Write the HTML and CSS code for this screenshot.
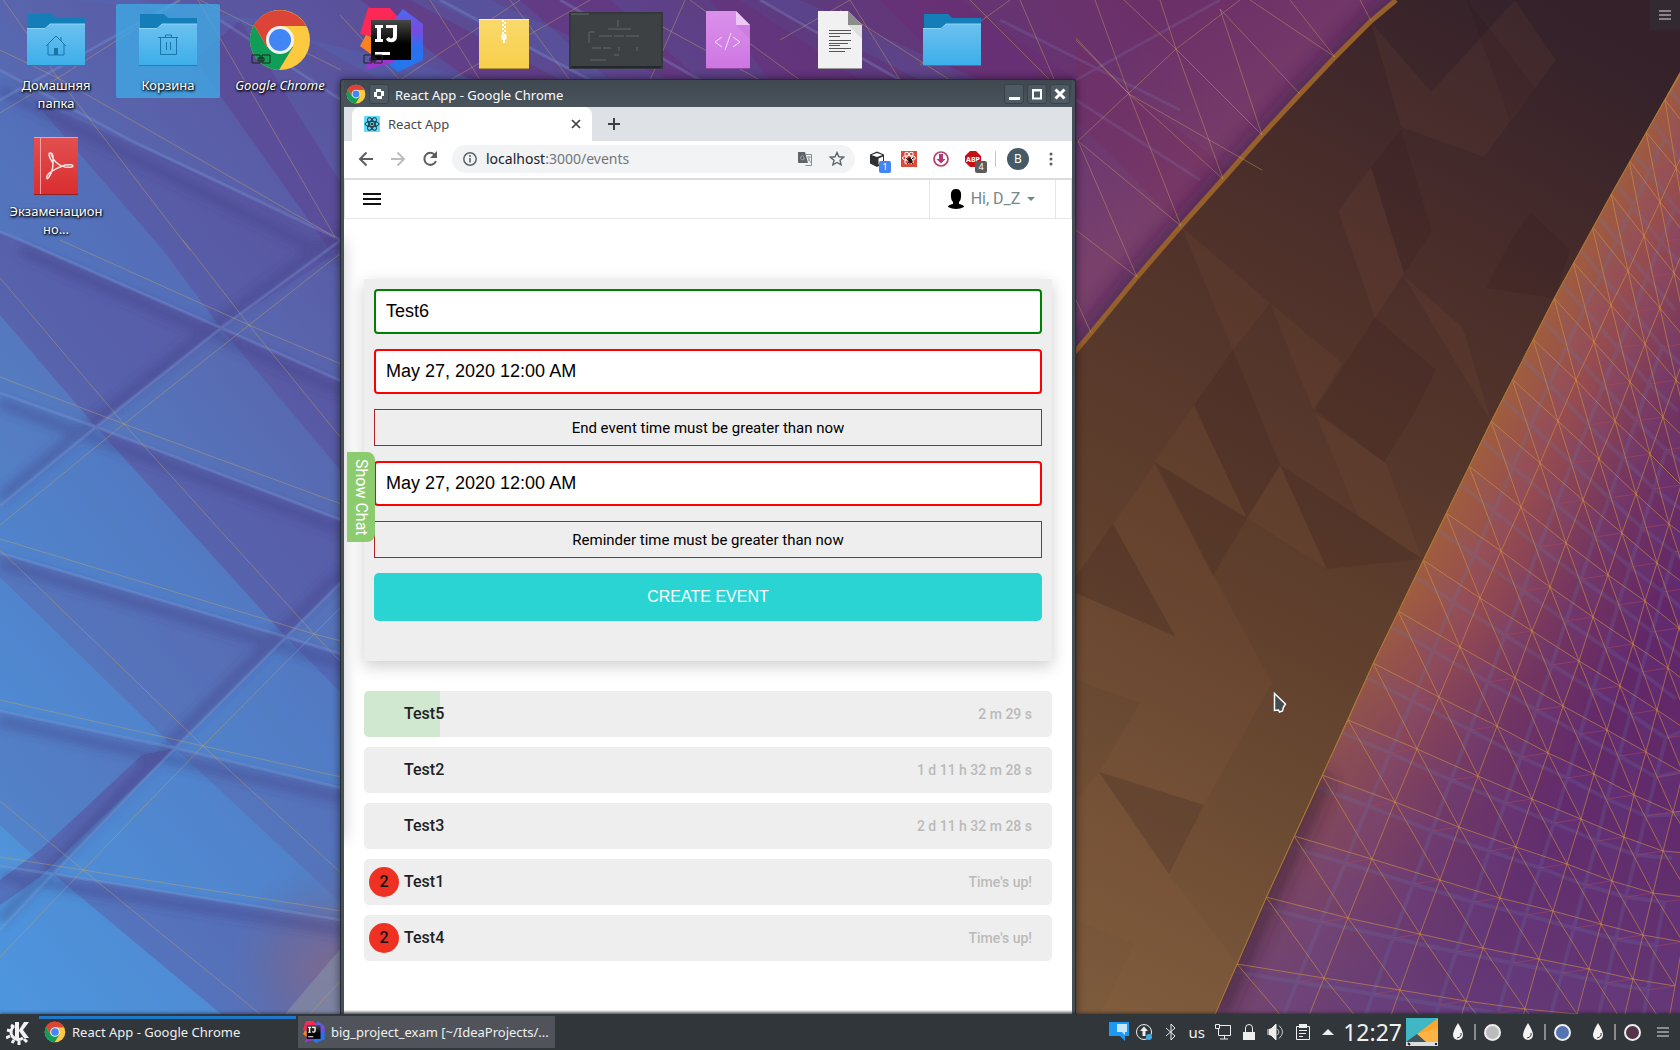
FILE: index.html
```html
<!DOCTYPE html>
<html lang="ru">
<head>
<meta charset="utf-8">
<title>Desktop</title>
<link rel="stylesheet" href="styles.css">
</head>
<body>
<svg width="0" height="0" class="defs" aria-hidden="true">
  <defs>
    <linearGradient id="folderFace" x2="0" y2="1"><stop offset="0" stop-color="#6cc1f0"/><stop offset="1" stop-color="#3daee9"/></linearGradient>
    <linearGradient id="ijBlue" x2="0" y2="1"><stop offset="0" stop-color="#4a6af0"/><stop offset=".35" stop-color="#7a4ae0"/><stop offset=".6" stop-color="#2a70f0"/><stop offset="1" stop-color="#2478ea"/></linearGradient>
    <linearGradient id="ijBlack" x2="0" y2="1"><stop offset="0" stop-color="#484848"/><stop offset=".6" stop-color="#000"/></linearGradient>
    <linearGradient id="pdfRed" x2="0" y2="1"><stop offset="0" stop-color="#e25050"/><stop offset="1" stop-color="#da2d30"/></linearGradient>
    <linearGradient id="zipYellow" x2="0" y2="1"><stop offset="0" stop-color="#f9d96b"/><stop offset="1" stop-color="#f7cf4b"/></linearGradient>
    <linearGradient id="codePink" x2="0" y2="1"><stop offset="0" stop-color="#da90ea"/><stop offset="1" stop-color="#cd76e2"/></linearGradient>
  </defs>
  <symbol id="folder" viewBox="0 0 64 64">
    <path d="M4 6h24l4 4h29v12H4z" fill="#147eb8"/>
    <path d="M3 21h18l5-5h35v41H3z" fill="url(#folderFace)"/>
    <path d="M3 20.500h18l5-4.500h35" fill="none" stroke="#8fd4f8"/>
    <path d="M3 57.500h58" stroke="#2b7ca8"/>
  </symbol>
  <symbol id="chrome" viewBox="0 0 64 64">
    <circle cx="32" cy="32" r="30" fill="#fdca3f"/>
    <path d="M32 32 6 17A30 30 0 0 1 58 18H32z" fill="#db4437"/>
    <path d="M6 17A30 30 0 0 0 31 62L45 39 32 32 19 39z" fill="#0f9d58"/>
    <path d="M6 17 19 39l4-19 9-2h26A30 30 0 0 0 6 17z" fill="#db4437"/>
    <circle cx="32" cy="32" r="14" fill="#f1f1f1"/><circle cx="32" cy="32" r="11" fill="#4285f4"/>
  </symbol>
  <symbol id="idea" viewBox="0 0 64 64">
    <path d="M8 0h22l12 14v20L0 26z" fill="#fe2857"/>
    <path d="M6 27 0 38l12 9 4-16z" fill="#fd8121"/>
    <path d="m43 1 20 15v36L38 64 24 52V24z" fill="url(#ijBlue)"/>
    <path d="m12 44-7 18 30-8-5-14z" fill="#9a35d0"/>
    <path d="M11 12h40v40H11z" fill="url(#ijBlack)"/>
    <path d="M15 17h8v3h-2v11h2v3h-8v-3h2V20h-2zM26 17h11v11q0 7-7 6-3 0-4-3l3-2q2 3 4 0v-9h-7zM15 44h15v3H15z" fill="#fff"/>
  </symbol>
  <symbol id="chain" viewBox="0 0 20 10"><path d="M1 1h8v8H1zM11 1h8v8h-8zM7 4h6v3H7z" fill="none" stroke="#1c2420"/></symbol>
  <symbol id="drop" viewBox="0 0 12 18"><path d="M6 0q5 8 5 12a5 5 0 0 1-10 0Q1 8 6 0z" fill="#f4f4f4"/><path d="M9 10q1 4-4 5" fill="none" stroke="#31363b"/></symbol>
</svg>

<div class="desktop">
  <svg id="wallpaper" class="wallpaper" viewBox="0 0 1680 1050" preserveAspectRatio="xMidYMid slice" aria-hidden="true">
    <defs>
      <linearGradient id="sky" gradientUnits="userSpaceOnUse" x1="30" y1="1010" x2="1180" y2="60">
        <stop offset="0" stop-color="#4f9adf"/><stop offset=".28" stop-color="#5578be"/><stop offset=".5" stop-color="#5a5aa4"/><stop offset=".62" stop-color="#5b4e98"/><stop offset=".82" stop-color="#5e3a80"/><stop offset="1" stop-color="#6c3068"/>
      </linearGradient>
      <linearGradient id="brown" gradientUnits="userSpaceOnUse" x1="1090" y1="1000" x2="1600" y2="30">
        <stop offset="0" stop-color="#7c5a3c"/><stop offset=".4" stop-color="#5f3f2c"/><stop offset=".7" stop-color="#4e302a"/><stop offset="1" stop-color="#34212a"/>
      </linearGradient>
      <linearGradient id="dusk" gradientUnits="userSpaceOnUse" x1="1440" y1="500" x2="1660" y2="610">
        <stop offset="0" stop-color="#a2603c"/><stop offset=".3" stop-color="#964c50"/><stop offset=".65" stop-color="#743560"/><stop offset="1" stop-color="#622768"/>
      </linearGradient>
      <linearGradient id="duskLow" gradientUnits="userSpaceOnUse" x1="1560" y1="640" x2="1440" y2="1014">
        <stop offset="0" stop-color="#5f3070" stop-opacity="0"/><stop offset="1" stop-color="#65407c" stop-opacity=".75"/>
      </linearGradient>
      <linearGradient id="rose" gradientUnits="userSpaceOnUse" x1="1090" y1="60" x2="1180" y2="210">
        <stop offset="0" stop-color="#7a3f6a" stop-opacity="0"/><stop offset="1" stop-color="#7e4268" stop-opacity=".8"/>
      </linearGradient>
      <radialGradient id="ember" gradientUnits="userSpaceOnUse" cx="330" cy="970" r="110"><stop offset="0" stop-color="#7c6a90"/><stop offset=".5" stop-color="#6c6a9c" stop-opacity=".7"/><stop offset="1" stop-color="#5a70b0" stop-opacity="0"/></radialGradient>
      <filter id="soft" x="-20%" y="-20%" width="140%" height="140%"><feGaussianBlur stdDeviation="9"/></filter>
      <filter id="mist" x="-5%" y="-5%" width="110%" height="110%"><feGaussianBlur stdDeviation="5"/></filter>
      <clipPath id="duskClip"><path d="M1680 72 1611 194 1554 298 1491 421 1423 560 1373 663 1322 775 1266 897 1215 1013V1050H1680z"/></clipPath>
    </defs>
    <path d="M0 0h1680v1050H0z" fill="url(#sky)"/>
    <path d="M1000 0H1400L1076 360z" fill="url(#rose)"/>
    <g fill="#5b4795" fill-opacity=".4">
      <path d="M0 240V315L96 427 221 328 20 240 0 232z"/>
      <path d="M96 427 286 637 341 582V520z"/>
      <path d="M221 328 341 471V381z"/>
      <path d="M0 553 0 577 175 748 286 637z" fill-opacity=".25"/>
      <path d="M286 637 341 693V654z"/>
      <path d="M175 748 341 903V788z" fill-opacity=".22"/>
      <path d="M53 874 221 1014H341V920z" fill-opacity=".38"/>
      <path d="M0 711V825L53 874 175 748z" fill-opacity=".2"/>
      <path d="M0 905 40 877 175 748 142 755 40 850 0 880z" fill-opacity=".45"/>
      <path d="M33 100 163 250 221 328 341 250V237z" fill-opacity=".3"/>
      <path d="M195 60 330 250H345V190L240 20z" fill-opacity=".7"/>
      <path d="M360 0 470 80H560L410 0zM520 0 610 80H700L610 0zM710 0 770 80H860L740 0zM880 0 960 80 1076 160V80L960 0z" fill="#6b2a76"/>
      <path d="M1076 45 1140 100 1230 170 1180 226 1076 120z" fill="#762a5c" fill-opacity=".3"/>
    </g>
    <g fill="#4a86d8" fill-opacity=".22">
      <path d="M0 506 96 427 286 637 0 553z"/>
      <path d="M0 577V711L175 748z"/>
      <path d="M53 874 0 930V1014H221z"/>
      <path d="M0 70V232L221 328 163 250 33 100z" fill-opacity=".18"/>
      <path d="M175 748 286 637 341 654V788z"/>
      <path d="M70 0h70L480 80H380L270 20zM430 0h60l180 80h-80zM760 0h40l180 80h-60z" fill-opacity=".14"/>
      <path d="M53 874 175 748 341 903V920z"/>
    </g>
    <path d="M200 1014V850H341V1014z" fill="url(#ember)"/>
    <path d="M285 1014 341 948V1014z" fill="#8188a2" fill-opacity=".8"/>
    <path d="M20 250 341 391M0 403 341 530M0 563 341 664M0 721 341 798M0 876 341 930M0 498 96 419 221 320 341 232M0 920 175 738 341 572M0 90 341 262" fill="none" stroke="#3f3a80" stroke-opacity=".35" stroke-width="12" filter="url(#mist)"/>
    <g fill="none" stroke="#86a0dc" stroke-opacity=".28" stroke-width="3">
      <path d="M0 232 20 240 221 328 341 381M0 393 96 427 341 520M0 553 286 637 341 654M0 711 175 748 341 788M0 866 53 874 341 920M0 506 96 427 221 328 341 240M0 930 53 874 175 748 286 637 341 582M0 70 130 140 341 240M0 100 180 0M220 20 341 100M440 0 590 80M560 0 700 80M760 0 900 80" />
      <path d="M1000 20 1180 110M1076 100 1200 180M1076 80 1220 0" stroke-opacity=".14"/>
    </g>
    <path d="M1420 -20 1371 21 1300 94 1223 179 1137 277 1060 373" fill="none" stroke="#301848" stroke-width="24" stroke-opacity=".5" filter="url(#soft)"/>
    <path d="M1395 0 1371 21 1335 57 1300 94 1262 135 1223 179 1181 226 1137 277 1091 333 1070 360V1050H1215L1266 897 1322 775 1373 663 1423 560 1491 421 1554 298 1611 194 1680 72V0z" fill="url(#brown)"/>
    <g fill="#b0754a" fill-opacity=".08">
      <path d="M1194 405 1247 518 1154 462zM1280 465 1247 518 1327 569zM1270 303 1342 363 1313 410zM1315 413 1386 463 1422 559 1358 516zM1403 275 1463 328 1491 421zM1371 22 1431 92 1401 127zM1338 211 1371 167 1404 273 1375 318zM1099 772 1204 805 1140 703zM1134 944 1169 874 1237 963zM1175 636 1272 683 1214 576 1156 462 1113 524zM1076 593 1175 636 1272 683 1204 805 1140 703 1076 680zM1076 800 1099 772 1169 874 1134 944 1076 920zM1134 944 1237 963 1215 1013H1100zM1401 127 1484 157 1556 60 1515 0 1431 92zM1181 226 1233 350 1270 303z"/>
    </g>
    <g fill="#24101a" fill-opacity=".13">
      <path d="M1154 462 1247 518 1213 576zM1375 318 1436 370 1412 417zM1315 410 1375 318 1412 417 1384 462zM1401 130 1432 231 1404 273 1371 167zM1113 524 1175 636 1076 593V576zM1099 772 1204 805 1169 874zM1280 465 1358 516 1422 559 1327 569zM1194 405 1233 350 1280 465 1247 518zM1467 0 1535 88 1510 120zM1486 288 1508 246 1530 212 1570 250 1554 298z"/>
    </g>
    <path d="M1396 0 1371 21 1335 57 1300 94 1262 135 1223 179 1181 226 1137 277 1091 333 1074 353" fill="none" stroke="#96602c" stroke-width="5"/>
    <g clip-path="url(#duskClip)">
      <path d="M1200 50h480v1000h-480z" fill="url(#dusk)"/>
      <path d="M1200 600h480v450h-480z" fill="url(#duskLow)"/>
      <path id="facets" fill="#6a5ac0" fill-opacity=".09"/>
      <path id="ghost" fill="none" stroke="#6a78a8" stroke-opacity=".2" stroke-width="4"/>
      <path id="ticks" fill="none" stroke="#b04858" stroke-opacity=".5"/>
      <path d="M1322 775 1266 897 1215 1013" fill="none" stroke="#3a2030" stroke-opacity=".6" stroke-width="26" filter="url(#soft)"/>
      <path id="lattice" fill="none" stroke="#d79a3c" stroke-opacity=".55"/>
      <path d="M1680 72 1611 194 1554 298 1491 421 1423 560 1373 663 1322 775 1266 897 1215 1013" fill="none" stroke="#a87830" stroke-width="2"/>
    </g>
    <g fill="none" stroke="#c8a860" stroke-opacity=".42">
      <path d="M0 278 124 424 314 634 341 662M183 240 249 325 341 438M60 240 249 325 341 364M0 377 124 424 341 504M0 539 314 634 341 641M0 550 203 746 341 873M0 700 203 746 341 777M0 801 83 870 260 1014M0 857 83 870 341 911M0 525 124 424 249 325 341 253M0 957 83 870 203 746 314 634 341 607M310 1014 341 980"/>
      <path d="M0 -5 58 78 190 250M0 50 58 78 335 237M0 113 58 78 180 0M198 0 335 237M200 0 341 70M430 0 480 80M340 15 400 80M510 0 570 80M400 80 520 0M590 0 450 80M685 0 650 80M690 0 800 80M650 20 760 80M780 40 850 0M850 0 900 80M840 10 950 80M920 65 1010 0M970 0 1050 80M1020 0 1076 130M1076 40 1129 94 1262 170"/>
      <path d="M1240 0 1176 49 1078 141M1220 9 1300 94M1220 9 1262 135 1176 49M1129 94 1223 179 1176 49 1160 0M1078 141 1181 226 1129 94 1095 0M1078 141 1137 277 1076 230M1091 333 1076 300M1371 21 1360 0M1290 0 1335 57 1250 0M1076 38 1129 94M1124 0 1176 49"/>
    </g>
  </svg>

  <main class="workspace">
    <div class="icons">
      <a class="icon" href="#home"><svg class="icon-art" viewBox="0 0 64 64"><use href="#folder"/><path d="M22 38l10-10 10 10M24 36v11h16V36M37 29v4" fill="none" stroke="#1a75a8"/><path d="M30 40h4v7h-4z" fill="#1a75a8"/></svg><span>Домашняя папка</span></a>
      <a class="icon selected" href="#trash"><svg class="icon-art" viewBox="0 0 64 64"><use href="#folder"/><path d="M22 29.500h20M29.500 29v-2h6v2M24.500 30v16.500h16V30M30.500 34v8M34.500 34v8" fill="none" stroke="#1a75a8"/></svg><span>Корзина</span></a>
      <a class="icon" href="#chrome-link"><svg class="icon-art" viewBox="0 0 64 64"><use href="#chrome"/><use href="#chain" x="3" y="46" width="20" height="10"/></svg><em>Google Chrome</em></a>
      <a class="icon" href="#idea-link" aria-label="IDE"><svg class="icon-art" viewBox="0 0 64 64"><use href="#idea"/><use href="#chain" x="3" y="46" width="20" height="10"/></svg></a>
      <a class="icon" href="#zip" aria-label="Archive"><svg class="icon-art" viewBox="0 0 64 64"><path d="M7 11h50v50H7z" fill="url(#zipYellow)"/><path d="M7 60.500h50" stroke="#b5952f"/><path d="M7 11.500h50" stroke="#fff0b0"/><path d="M31 12v16" stroke="#fff" stroke-width="2" stroke-dasharray="2 2"/><path d="M33 14v14" stroke="#fff" stroke-width="2" stroke-dasharray="2 2"/><path d="M30.500 27.500h3v3h-3zM32 31v4" fill="none" stroke="#fff" stroke-width="2"/></svg></a>
      <a class="icon" href="#shot" aria-label="Screenshot"><svg class="icon-art wide" viewBox="0 0 96 64"><path d="M1 4h94v57H1z" fill="#33383d"/><path d="M3 6h90v52H3z" fill="#3d4144"/><path d="M3 6h18M50 12v7M40 21h23M21 24v11M27 24h-6M31 28h13M46 28h10M58 28h13M24 40h9M35 40h8M51 39v4M69 39v4M46 47h5M22 52h16" stroke="#62686b" fill="none"/><path d="M3 59h90" stroke="#22282d" stroke-width="2"/></svg></a>
      <a class="icon" href="#code" aria-label="Markup file"><svg class="icon-art" viewBox="0 0 64 64"><path d="M10 3h30l14 14v44H10z" fill="url(#codePink)"/><path d="M40 3l14 14H40z" fill="#edc7f5"/><path d="M40 17h14v14z" fill="#b868cc" fill-opacity=".3"/><path d="M10 60.500h44" stroke="#8f4aa0"/><path d="m26 29-7 5 7 5M37 29l7 5-7 5M35 25l-6 17" fill="none" stroke="#f8e6fc"/></svg></a>
      <a class="icon" href="#text" aria-label="Text file"><svg class="icon-art" viewBox="0 0 64 64"><path d="M10 3h30l14 14v44H10z" fill="#f1f1f1"/><path d="M40 3l14 14H40z" fill="#8b8b8b"/><path d="M40 17h14v14z" fill="#ccc" fill-opacity=".5"/><path d="M10 60.500h44" stroke="#999"/><path d="M21 22.500h22M21 25.500h22M21 28.500h11M21 32.500h22M21 35.500h19M21 37.500h11M21 40.500h22M21 43.500h16" stroke="#555"/></svg></a>
      <a class="icon" href="#folder-link" aria-label="Folder"><svg class="icon-art" viewBox="0 0 64 64"><use href="#folder"/></svg></a>
      <a class="icon row2" href="#pdf"><svg class="icon-art" viewBox="0 0 64 64"><path d="M10 3h44v58H10z" fill="url(#pdfRed)"/><path d="M10 3.500h44M16.500 4v56" stroke="#f4a0a0"/><path d="M10 60.500h44" stroke="#8f2024"/><path d="M29 29q-6-9-3-10 4-1 3 10 0 8-4 14-3 4-2-1 2-5 18-11 8-1 8 1t-8 1Q31 31 27 20" fill="none" stroke="#fbe3e3" stroke-width="1.500"/></svg><span>Экзаменационно...</span></a>
    </div>

    <button class="toolbox" aria-label="Desktop toolbox"><svg width="14" height="12"><path d="M1 2h12M1 6h12M1 10h12" stroke="#a8a3a8" stroke-width="1.500"/></svg></button>

    <section class="window">
      <header class="titlebar">
        <svg width="20" height="20"><use href="#chrome"/></svg>
        <button class="win-btn" aria-label="Pin"><svg width="12" height="12"><path d="M3 1h5v2h3v5H9v3H4V9H1V4h2z" fill="#fff"/><path d="M4 4h4v4H4z" fill="#4d5a63"/></svg></button>
        <h1>React App - Google Chrome</h1>
        <button class="win-btn" aria-label="Minimize"><svg width="12" height="12"><path d="M1 10.500h11" stroke="#fff" stroke-width="3"/></svg></button>
        <button class="win-btn" aria-label="Maximize"><svg width="12" height="12"><path d="M2 2.500h8v8H2z" fill="none" stroke="#fff" stroke-width="2"/><path d="M1 2h10" stroke="#fff" stroke-width="2"/></svg></button>
        <button class="win-btn" aria-label="Close"><svg width="12" height="12"><path d="m1.500 1.500 9 9m0-9-9 9" stroke="#fff" stroke-width="3"/></svg></button>
      </header>
      <div class="browser">
        <div class="tabs">
          <div class="tab">
            <svg width="16" height="16" viewBox="0 0 16 16"><rect width="16" height="16" rx="1" fill="#61dafb"/><g fill="none" stroke="#20323a"><ellipse cx="8" cy="8" rx="7" ry="2.700"/><ellipse cx="8" cy="8" rx="7" ry="2.700" transform="rotate(60 8 8)"/><ellipse cx="8" cy="8" rx="7" ry="2.700" transform="rotate(120 8 8)"/></g><circle cx="8" cy="8" r="1.300" fill="#20323a"/></svg>
            <span>React App</span>
            <button aria-label="Close tab"><svg width="10" height="10"><path d="m1 1 8 8m0-8-8 8" stroke="#3c4043" stroke-width="1.700"/></svg></button>
          </div>
          <button class="new-tab" aria-label="New tab"><svg width="12" height="12"><path d="M6 0v12M0 6h12" stroke="#3c4043" stroke-width="2"/></svg></button>
        </div>
        <div class="toolbar">
          <button aria-label="Back"><svg width="16" height="16"><path d="M15 8H2m6.500-6.500L2 8l6.500 6.500" fill="none" stroke="#5a5e62" stroke-width="2"/></svg></button>
          <button aria-label="Forward"><svg width="16" height="16"><path d="M1 8h13M7.500 1.500 14 8l-6.500 6.500" fill="none" stroke="#bbbdc0" stroke-width="2"/></svg></button>
          <button aria-label="Reload"><svg width="16" height="16"><path d="M13 4A6 6 0 1 0 14 10" fill="none" stroke="#5a5e62" stroke-width="2"/><path d="M15 0v7H8z" fill="#5a5e62"/></svg></button>
          <div class="address">
            <svg width="14" height="14"><circle cx="7" cy="7" r="6.200" fill="none" stroke="#5f6368" stroke-width="1.500"/><path d="M7 6v4.500M7 3v2" stroke="#5f6368" stroke-width="1.600"/></svg>
            <span class="url" role="textbox" aria-label="Address"><b>localhost</b>:3000/events</span>
            <svg width="14" height="14"><path d="M7.500 2.500h6v11h-6" fill="none" stroke="#8a8d91"/><path d="M0 0h7l3 11H1q-1 0-1-1z" fill="#5f6368"/><path d="M6 4.500A2 2 0 1 0 6.500 6H5M9 5h4M11 4q1 4-2 6M10 6l3 5" fill="none" stroke="#9da0a3"/></svg>
            <svg class="star" width="16" height="16"><path d="m8 1.500 1.900 4.300 4.700.4-3.600 3.100 1.100 4.600L8 11.500l-4.100 2.400L5 9.300 1.400 6.200l4.700-.4z" fill="none" stroke="#5f6368" stroke-width="1.400"/></svg>
          </div>
          <button class="ext" aria-label="Cube extension"><svg width="16" height="16"><path d="m8 .5 7 3v9l-7 3.500-7-3.500v-9z" fill="#2e3134"/><path d="m2.500 4 5.500-2 5.500 2L8 6z" fill="#fff"/><path d="M9.500 7.500 14 5.500v6l-4.500 2z" fill="#fff"/></svg><span class="badge blue">1</span></button>
          <button class="ext" aria-label="React extension"><svg width="16" height="16"><path d="M0 0h16v16H0z" fill="#d94a38"/><g fill="none" stroke="#fff"><ellipse cx="8" cy="7" rx="6.500" ry="2.500"/><ellipse cx="8" cy="7" rx="6.500" ry="2.500" transform="rotate(60 8 7)"/><ellipse cx="8" cy="7" rx="6.500" ry="2.500" transform="rotate(120 8 7)"/></g><ellipse cx="9" cy="9.500" rx="2" ry="3" transform="rotate(-40 9 9.500)" fill="#301512"/><path d="M5 7l7 6M12 7l-6 6M9 6v7" stroke="#301512"/></svg></button>
          <button class="ext" aria-label="Download extension"><svg width="16" height="16"><circle cx="8" cy="8" r="7" fill="#fff" stroke="#b8406a" stroke-width="1.700"/><path d="M6 3h4v5h2.500L8 12.500 3.500 8H6z" fill="#b03a78"/></svg></button>
          <button class="ext" aria-label="Ad blocker"><svg width="16" height="16"><path d="M5 0h6l5 5v6l-5 5H5l-5-5V5z" fill="#c70d16"/><text class="abp" x="8" y="11" text-anchor="middle">ABP</text></svg><span class="badge">4</span></button>
          <i class="split"></i>
          <button class="avatar">B</button>
          <button class="dots" aria-label="Menu"><svg width="4" height="14"><path d="M2 2h0M2 7h0M2 12h0" stroke="#5a5e62" stroke-width="3" stroke-linecap="round"/></svg></button>
        </div>
        <div class="page">
          <nav class="nav">
            <button class="burger" aria-label="Menu"><svg width="18" height="12"><path d="M0 1h18M0 6h18M0 11h18" stroke="#111" stroke-width="2"/></svg></button>
            <button class="user"><svg width="16" height="20"><path d="M8 0q6 0 5 8 0 3-2 5v2q5 1 5 3-8 4-16 0 0-2 5-3v-2Q3 11 3 8 2 0 8 0z"/></svg>Hi, D_Z<svg width="8" height="4"><path d="M0 0h8L4 4z" fill="#6f8a8a"/></svg></button>
          </nav>
          <form class="event-form">
            <input class="ok" type="text" value="Test6" aria-label="Event name">
            <input class="bad" type="text" value="May 27, 2020 12:00 AM" aria-label="End time">
            <p>End event time must be greater than now</p>
            <input class="bad" type="text" value="May 27, 2020 12:00 AM" aria-label="Reminder time">
            <p>Reminder time must be greater than now</p>
            <button type="button">CREATE EVENT</button>
          </form>
          <ul class="events">
            <li><i class="progress" style="width:11%"></i><span class="mark"></span><strong>Test5</strong><time>2 m 29 s</time></li>
            <li><span class="mark"></span><strong>Test2</strong><time>1 d 11 h 32 m 28 s</time></li>
            <li><span class="mark"></span><strong>Test3</strong><time>2 d 11 h 32 m 28 s</time></li>
            <li><span class="mark due">2</span><strong>Test1</strong><time>Time's up!</time></li>
            <li><span class="mark due">2</span><strong>Test4</strong><time>Time's up!</time></li>
          </ul>
          <button class="chat">Show Chat</button>
        </div>
      </div>
    </section>

    <svg class="cursor" width="14" height="22"><path d="M1.500 1.500v17l4-.5 1 2 3-1 1-4 2-3z" fill="#454b4e" stroke="#fff" stroke-width="1.500"/></svg>
  </main>

  <footer class="taskbar">
    <button class="launcher" aria-label="Applications"><svg width="24" height="26"><path d="M9 3h4v8l5-8h5l-6 8 6 8h-5l-5-7v7H9z" fill="#f2f2f2"/><path d="M8 7a7 7 0 1 0 9 12" fill="none" stroke="#f2f2f2" stroke-width="3"/><path d="M8 8 5 6M5 12l-4-1M4 17l-4 2M8 21l-2 3M13 22v4M18 20l3 3" stroke="#f2f2f2" stroke-width="3"/></svg></button>
    <button class="task active"><svg width="22" height="22"><use href="#chrome"/></svg><span>React App - Google Chrome</span></button>
    <button class="task"><svg width="22" height="22"><use href="#idea"/></svg><span>big_project_exam [~/IdeaProjects/...</span></button>
    <div class="tray">
      <svg width="20" height="20"><path d="M0 0h20v14h-4v5l-5-5H0z" fill="#1d99f3"/><path d="M8 2h10v8h-2v3l-3-3H8z" fill="#c5e6fb"/></svg>
      <svg width="18" height="18"><circle cx="9" cy="9" r="7.500" fill="none" stroke="#eee"/><path d="M9 3.500 13 8h-2.500v5h-3V8H5z" fill="#eee"/><circle cx="14" cy="14" r="3" fill="#3daee9"/></svg>
      <svg width="12" height="18"><path d="m1 5 9 8-4 4V1l4 4-9 8" fill="none" stroke="#eee"/></svg>
      <span>us</span>
      <svg width="16" height="16"><path d="M4 1.500h11.500v10H3.500V5M.5.500h4v4h-4zM9.500 12v3M5 15h8" fill="none" stroke="#eee"/></svg>
      <svg width="12" height="16"><path d="M0 8h12v8H0z" fill="#eee"/><path d="M2.500 8V4q0-3.500 3.500-3.500T9.500 4v4" fill="none" stroke="#eee"/></svg>
      <svg width="17" height="16"><path d="M1 5v6M2.500 5H4l5-5v16l-5-5H2.500z" fill="#eee" stroke="#eee"/><path d="M10.500 5q3 3 0 6M12 1.500q7 6.500 0 13" fill="none" stroke="#ccc"/></svg>
      <svg width="14" height="16"><path d="M.5 2.500h13v13H.5z" fill="none" stroke="#eee"/><path d="M3 0h8v4H3z" fill="#eee"/><path d="M3 6.500h8M3 9.500h7M3 12.500h4" stroke="#eee"/></svg>
      <svg width="12" height="6"><path d="m0 6 6-6 6 6z" fill="#eee"/></svg>
    </div>
    <time class="clock">12:27</time>
    <svg class="peek" width="32" height="28"><path d="M0 0h32v28H0z" fill="#3fb7c4"/><path d="M32 0v24H20L11 16z" fill="#fba62f"/><path d="m11 16 21-6v14H20z" fill="#ffb347"/><path d="m0 24 11-8 9 8z" fill="#41535c"/><path d="M0 24h32v4H0z" fill="#ddd"/><path d="m2 25 2 2M29 26h2" stroke="#222" stroke-width="2"/></svg>
    <div class="swatches">
      <span><svg width="12" height="18"><use href="#drop"/></svg><i></i><b class="grey"></b></span>
      <span><svg width="12" height="18"><use href="#drop"/></svg><i></i><b class="blue"></b></span>
      <span><svg width="12" height="18"><use href="#drop"/></svg><i></i><b class="plum"></b></span>
    </div>
    <button class="panel-menu" aria-label="Panel menu"><svg width="12" height="10"><path d="M0 1h12M0 5h12M0 9h12" stroke="#888d91" stroke-width="2"/></svg></button>
  </footer>
</div>
<script src="wallpaper.js"></script>
</body>
</html>
```
FILE: styles.css
```css
* { box-sizing: border-box; }
body { margin: 0; font: 13px/18px "Noto Sans", sans-serif; color: #eff0f1; }
button { border: 0; padding: 0; background: none; font: inherit; color: inherit; display: flex; align-items: center; justify-content: center; }
svg { display: block; flex: none; }
.defs { position: absolute; }

.desktop { position: relative; height: 100vh; display: flex; flex-direction: column; overflow: hidden; }
.wallpaper { position: absolute; inset: 0; width: 100%; height: 100%; }
.workspace { position: relative; flex: 1; min-height: 0; }

.icons { display: grid; grid-template-columns: repeat(9, 104px); grid-auto-rows: 118px; gap: 8px; padding: 4px; align-items: start; }
.icon { display: flex; flex-direction: column; align-items: center; gap: 4px; height: 94px; padding-top: 4px; border-radius: 2px; color: #fff; text-decoration: none; text-align: center; text-shadow: 1px 1px 2px #000, 0 1px 3px #000; }
.icon-art { width: 64px; height: 64px; }
.icon-art.wide { width: 96px; }
.icon span, .icon em { width: 104px; padding: 0 4px; overflow-wrap: anywhere; }
.icon em { padding: 0; }
.selected { background: #3daee9bb; }
.row2 { grid-column: 1; }

.toolbox { position: absolute; top: 0; right: 0; width: 30px; height: 30px; background: #31363b66; }
.cursor { position: absolute; left: 1273px; top: 692px; }

.window { position: absolute; left: 340px; top: 79px; bottom: 0; width: 736px; display: flex; flex-direction: column; padding: 0 3px; background: #465058; border: solid #262c31; border-width: 1px 1px 0; border-radius: 3px 3px 0 0; box-shadow: 0 0 8px #0008; }
.titlebar { display: flex; align-items: center; gap: 3px; height: 27px; padding: 1px 2px 0 2px; background: linear-gradient(#3f484f, #4a545c); }
.titlebar h1 { flex: 1; margin: 0 0 0 3px; padding-top: 2px; font-size: 13px; font-weight: 400; line-height: 18px; color: #fcfcfc; }
.win-btn { width: 20px; height: 20px; background: #4d5a63; border: 1px solid #3a4248; border-radius: 3px; }

.browser { flex: 1; min-height: 0; display: flex; flex-direction: column; background: #fff; }
.tabs { display: flex; height: 34px; padding-left: 8px; background: #dee1e6; }
.tab { width: 240px; display: flex; align-items: center; gap: 8px; padding: 0 11px 0 12px; background: #fff; border-radius: 8px 8px 0 0; color: #45494d; }
.tab span { flex: 1; }
.new-tab { width: 44px; }
.toolbar { display: flex; align-items: center; height: 39px; padding: 0 15px 2px 14px; gap: 16px; border-bottom: 2px solid #dcdcdc; }
.address { flex: 1; display: flex; align-items: center; height: 28px; padding: 0 10px 0 11px; border-radius: 14px; background: #f1f3f4; margin: 0 -2px; }
.address .url { flex: 1; padding-left: 9px; font-size: 14px; line-height: 20px; color: #72767a; }
.url b { font-weight: 400; color: #202124; }
.address .star { margin-left: 17px; }
.ext { position: relative; width: 16px; height: 16px; }
.badge { position: absolute; left: 10px; top: 10px; width: 12px; height: 12px; border-radius: 2px; background: #5b5b5b; color: #fff; font: 9px/12px "Noto Sans", sans-serif; }
.badge.blue { background: #4285f4; }
.abp { font: 700 7px "Noto Sans", sans-serif; fill: #fff; }
.split { width: 1px; height: 16px; background: #c4c7ca; margin-left: -2px; }
.avatar { width: 22px; height: 22px; border-radius: 50%; background: #455a64; color: #fff; font-size: 12px; margin: 0 4px 0 -5px; }
.dots { width: 4px; margin: 0 4px 0 0; }

.page { position: relative; flex: 1; min-height: 0; overflow: hidden; font: 16px/20px Roboto, sans-serif; color: #111; }
.page::before { content: ""; position: absolute; left: -20px; top: 60px; width: 20px; height: 600px; box-shadow: 0 0 16px #0003; }
.page::after { content: ""; position: absolute; left: 0; right: 0; bottom: 0; height: 4px; background: linear-gradient(#fff0, #0007); }
.nav { display: flex; height: 39px; justify-content: space-between; border: 1px solid #e6e6e6; border-top: 0; padding-right: 15px; }
.burger { width: 54px; }
.user { width: 127px; gap: 7px; padding-right: 2px; border: solid #e6e6e6; border-width: 0 1px; color: #77888a; }
.event-form { position: relative; display: flex; flex-direction: column; gap: 15px; margin: 60px 20px 30px; padding: 10px 10px 40px; background: #eee; box-shadow: 0 5px 15px #0003; }
.event-form input { height: 45px; padding: 0 10px; border: 2px solid red; border-radius: 4px; background: #fff; font: 18px "Liberation Sans", sans-serif; color: #000; }
.event-form .ok { border-color: green; }
.event-form p { margin: 0; height: 37px; border: 1px solid #b22222; font-size: 15px; line-height: 37px; text-align: center; color: #000; }
.event-form button { height: 48px; border-radius: 5px; background: #29d4d3; font: 16px "Liberation Sans", sans-serif; color: #fff; }
.events { list-style: none; display: flex; flex-direction: column; gap: 10px; margin: 0 20px; padding: 0; }
.events li { position: relative; display: flex; align-items: center; gap: 5px; height: 46px; padding: 0 20px 0 5px; border-radius: 5px; background: #eee; overflow: hidden; }
.progress { position: absolute; left: 0; top: 0; bottom: 0; background: #d0e8cf; }
.mark { width: 30px; height: 30px; border-radius: 50%; line-height: 30px; text-align: center; font-weight: 500; }
.due { background: #ef3124; }
.events strong { position: relative; flex: 1; font-weight: 500; font-size: 16px; color: #212121; }
.events time { font-weight: 500; font-size: 14px; color: #bababa; }
.chat { position: absolute; left: 3px; top: 272px; width: 28px; height: 90px; border-radius: 0 8px 8px 0; background: #8ccb6e; color: #fff; writing-mode: vertical-rl; }

.taskbar { position: relative; display: flex; align-items: center; height: 36px; background: #31363b; box-shadow: 0 -1px 3px #0006; }
.launcher { width: 36px; }
.task { width: 257px; height: 32px; margin-left: 2px; padding: 0 6px 0 5px; gap: 6px; justify-content: flex-start; background: #50545a; white-space: nowrap; }
.task.active { background: none; box-shadow: inset 0 3px #2079c8; margin-left: 3px; }
.tray { margin-left: auto; display: flex; align-items: center; gap: 12px; font-size: 15px; }
.tray span { margin-right: -2px; }
.tray svg:first-child { margin-right: -6px; }
.clock { width: 70px; margin: 0 1px; padding-right: 3px; font-size: 23px; line-height: 32px; text-align: right; }
.swatches { display: flex; gap: 22px; margin-left: 14px; }
.swatches span { display: flex; align-items: center; gap: 8px; width: 48px; }
.swatches i { flex: none; width: 2px; height: 16px; margin-left: 2px; background: #888c8f; }
.swatches b { flex: none; width: 17px; height: 17px; border-radius: 50%; border: 2px solid #eee; }
.swatches .grey { background: #bbbcbd; }
.swatches .blue { background: #5573b0; }
.swatches .plum { background: #55344a; }
.panel-menu { width: 12px; margin: 0 11px 0 17px; }
```
FILE: wallpaper.js
```js
// Rows of lattice nodes, from the ridge outwards; "shift" pairs a node with its neighbour in the next row.
const rows = [
  [[1665,100],[1646,132],[1629,160],[1611,194],[1592,226],[1573,262],[1554,298],[1533,339],[1512,379],[1491,421],[1469,466],[1446,513],[1423,560],[1398,611],[1373,663],[1348,720],[1322,775],[1294,836],[1266,897],[1237,964],[1207,1032]],
  [[1660,202],[1644,236],[1628,271],[1611,305],[1594,342],[1576,380],[1558,421],[1540,463],[1521,507],[1501,551],[1480,598],[1460,647],[1439,697],[1417,749],[1395,802],[1372,859],[1348,918],[1324,978]],
  [[1674,273],[1660,308],[1645,344],[1630,382],[1615,421],[1599,459],[1583,500],[1566,543],[1550,587],[1532,631],[1515,678],[1497,726],[1478,776],[1459,827],[1440,880],[1420,934],[1400,990]],
  [[1663,417],[1650,454],[1636,494],[1622,533],[1608,575],[1593,617],[1579,661],[1563,706],[1548,753],[1532,799],[1516,847],[1500,898],[1483,948],[1466,1001]],
  [[1669,524],[1657,563],[1645,601],[1633,644],[1620,686],[1607,730],[1594,774],[1581,819],[1567,864],[1553,911],[1539,959],[1525,1009]],
  [[1679,628],[1668,668],[1657,710],[1646,752],[1634,795],[1624,837],[1612,881],[1601,924],[1589,969]],
  [[1673,812],[1663,851],[1653,893],[1643,935],[1633,979]],
  [[1675,986],[1667,1030]]
];
const shift = [2, 1, 3, 2, 2, 4, 4];

// Continues a row in a straight line past either end.
function node(row, k) {
  const end = k < 0 ? 0 : row.length - 1;
  if (k >= 0 && k <= end) return row[k];
  const step = k < 0 ? 1 : end;
  const a = row[step - 1], b = row[step];
  const n = k - end;
  return [row[end][0] + n * (b[0] - a[0]), row[end][1] + n * (b[1] - a[1])];
}

let lattice = "", ghost = "", facets = "", ticks = "";
rows.forEach((row, r) => {
  for (let k = -2; k < row.length + 2; k++) {
    const p = node(row, k), next = node(row, k + 1);
    lattice += `M${p} ${next}`;
    ghost += `M${p} ${next}`;
    ticks += `M${p} ${p[0] - 27} ${p[1] + 4}`;
    if (r === shift.length) continue;
    const gentle = node(rows[r + 1], k - shift[r]);
    const steep = node(rows[r + 1], k - shift[r] + 1);
    lattice += `M${gentle} ${p} ${steep}`;
    ghost += `M${p} ${gentle}`;
    facets += `M${p} ${gentle} ${steep}z`;
  }
});
document.getElementById("lattice").setAttribute("d", lattice);
document.getElementById("ticks").setAttribute("d", ticks);
document.getElementById("facets").setAttribute("d", facets);
const ghostPath = document.getElementById("ghost");
ghostPath.setAttribute("d", ghost);
ghostPath.setAttribute("transform", "translate(-27 4)");
```
